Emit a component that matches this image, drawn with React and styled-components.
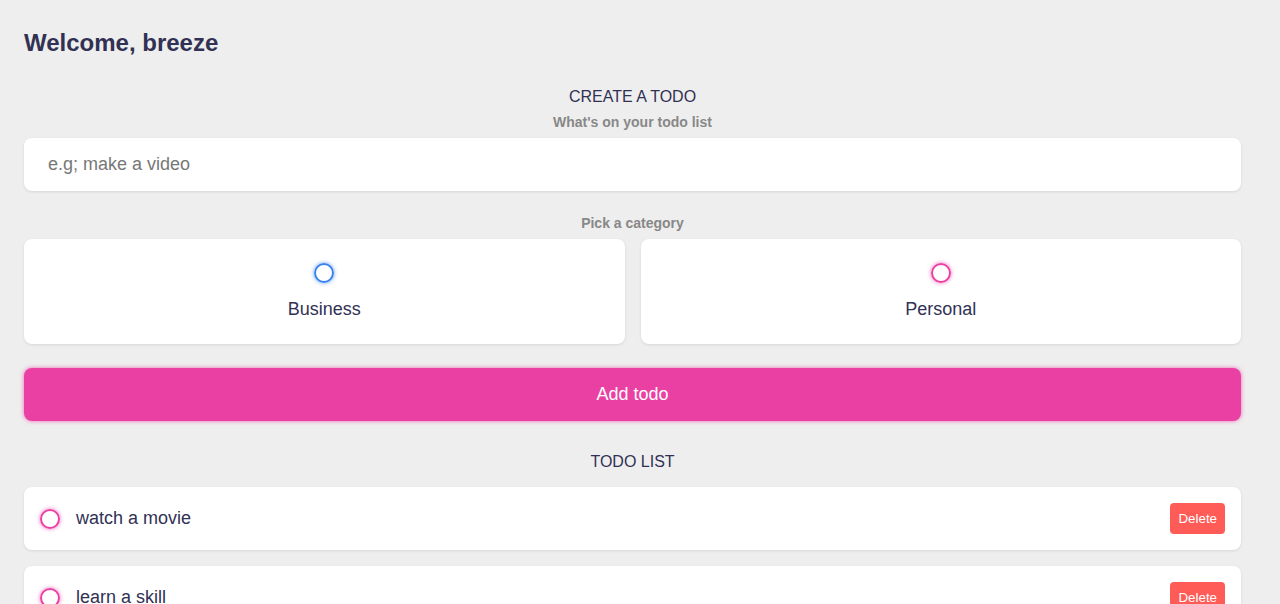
import React, {useState} from "react"
import styled, {createGlobalStyle} from 'styled-components'

const todos = [
  {id: 1, content: "watch a movie", category: "personal"},
  {id: 2, content: "learn a skill", category: "personal"},
  {id: 3, content: "read a book", category: "personal"},
  {id: 4, content: "go for a run", category: "personal"},
];

function App() {
  const [text, setText] = useState("");
  const [category, setCategory] = useState(null);

  return (
    <Page>
      <GlobalStyle/>
      <Greeting>Welcome, breeze</Greeting>

      <Section>
        <Heading>CREATE A TODO</Heading>
        <SubHeading>What's on your todo list</SubHeading>
        <TextInput
          placeholder="e.g; make a video"
          value={text}
          onChange={e => setText(e.target.value)}
        />
        <SubHeading>Pick a category</SubHeading>
        <Options>
          <Option onClick={() => setCategory("business")}>
            <Bubble kind="business" checked={category === "business"}/>
            <OptionLabel>Business</OptionLabel>
          </Option>
          <Option onClick={() => setCategory("personal")}>
            <Bubble kind="personal" checked={category === "personal"}/>
            <OptionLabel>Personal</OptionLabel>
          </Option>
        </Options>
        <AddButton>Add todo</AddButton>
      </Section>

      <ListSection>
        <Heading>TODO LIST</Heading>
        <List>
          {todos.map(todo => (
            <TodoItem key={todo.id}>
              <Bubble kind={todo.category}/>
              <TodoText>{todo.content}</TodoText>
              <DeleteButton>Delete</DeleteButton>
            </TodoItem>
          ))}
        </List>
      </ListSection>
    </Page>
  );
}

const GlobalStyle = createGlobalStyle`
* {
  margin: 0;
  padding: 0;
  box-sizing: border-box;
}
body {
  background: #eeeeee;
  color: #313154;
  font-family: "Liberation Sans", Arial, sans-serif;
}
`;

// right padding leaves room where the reference's scrollbar sits
const Page = styled.div`
display: flex;
flex-direction: column;
padding: 29px 39px 32px 24px;
`;

const Greeting = styled.h2`
font-size: 24px;
font-weight: 700;
color: #313154;
`;

const Section = styled.section`
display: flex;
flex-direction: column;
margin-top: 31px;
`;

const ListSection = styled(Section)`
margin-top: 32px;
`;

const Heading = styled.h3`
font-size: 16px;
font-weight: 400;
color: #313154;
text-align: center;
margin-bottom: 8px;
`;

const SubHeading = styled.h4`
font-size: 14px;
font-weight: 700;
color: #888;
text-align: center;
margin-bottom: 8px;
`;

const TextInput = styled.input`
display: block;
width: 100%;
font-family: "Liberation Sans", Arial, sans-serif;
font-size: 18px;
padding: 16px 24px;
color: #313154;
background: #fff;
border: none;
outline: none;
border-radius: 8px;
box-shadow: 0 1px 3px rgba(0, 0, 0, 0.1);
margin-bottom: 24px;

&::placeholder {
  color: #777;
}
`;

const Options = styled.div`
display: grid;
grid-template-columns: repeat(2, 1fr);
gap: 16px;
margin-bottom: 24px;
`;

const Option = styled.label`
display: flex;
flex-direction: column;
align-items: center;
justify-content: center;
background: #fff;
padding: 24px;
border-radius: 8px;
box-shadow: 0 1px 3px rgba(0, 0, 0, 0.1);
cursor: pointer;
`;

const OptionLabel = styled.div`
font-size: 18px;
color: #313154;
margin-top: 16px;
`;

const Bubble = styled.span`
display: flex;
flex-shrink: 0;
width: 20px;
height: 20px;
border-radius: 999px;
border: 2px solid ${props => props.kind === "business" ? "#3a82ee" : "#ea40a4"};
box-shadow: 0 0 4px ${props => props.kind === "business" ? "rgba(58, 130, 238, 0.75)" : "rgba(234, 64, 164, 0.75)"};
background: ${props => props.checked ? (props.kind === "business" ? "#3a82ee" : "#ea40a4") : "transparent"};
`;

const AddButton = styled.button`
display: block;
width: 100%;
font-family: "Liberation Sans", Arial, sans-serif;
font-size: 18px;
padding: 16px 24px;
color: #fff;
background: #ea40a4;
border: none;
border-radius: 8px;
box-shadow: 0 0 4px rgba(234, 64, 164, 0.75);
cursor: pointer;
`;

const List = styled.div`
margin-top: 8px;
display: flex;
flex-direction: column;
gap: 16px;
`;

const TodoItem = styled.div`
display: flex;
align-items: center;
background: #fff;
padding: 16px;
border-radius: 8px;
box-shadow: 0 1px 3px rgba(0, 0, 0, 0.1);
`;

const TodoText = styled.div`
flex: 1;
margin-left: 16px;
font-size: 18px;
color: #313154;
`;

const DeleteButton = styled.button`
display: block;
padding: 8px;
border: none;
border-radius: 4px;
background: #ff5b57;
color: #fff;
font-family: "Liberation Sans", Arial, sans-serif;
font-size: 13.333px;
cursor: pointer;
`;

export default App;
